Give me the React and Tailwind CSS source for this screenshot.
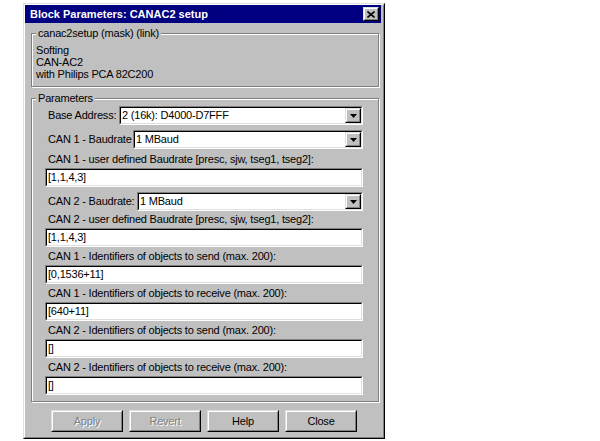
import React from 'react';

const Raised = ({ className = '', innerClassName = '', children }) => (
  <div className={`border border-t-[#dfdfdf] border-l-[#dfdfdf] border-r-black border-b-black ${className}`}>
    <div className={`h-full w-full border border-t-white border-l-white border-r-[#808080] border-b-[#808080] bg-[#c0c0c0] ${innerClassName}`}>
      {children}
    </div>
  </div>
);

const Sunken = ({ className = '', children }) => (
  <div className={`h-[19px] border border-t-[#808080] border-l-[#808080] border-r-white border-b-white ${className}`}>
    <div className="flex h-full w-full items-center border border-t-black border-l-black border-r-[#dfdfdf] border-b-[#dfdfdf] bg-white">
      {children}
    </div>
  </div>
);

const Field = ({ value }) => (
  <Sunken>
    <span className="pl-[1px] leading-[15px] whitespace-nowrap">{value}</span>
  </Sunken>
);

const Select = ({ value }) => (
  <Sunken className="flex-1">
    <span className="flex-1 pl-[1px] leading-[15px] whitespace-nowrap">{value}</span>
    <Raised className="h-[15px] w-[16px]" innerClassName="flex items-center justify-center">
      <svg width="7" height="4" viewBox="0 0 7 4">
        <path d="M0 0H7L3.5 4Z" fill="#000" />
      </svg>
    </Raised>
  </Sunken>
);

const SelectRow = ({ label, width, value, className = '' }) => (
  <div className={`flex items-center ${className}`}>
    <span className={`pl-[3px] whitespace-nowrap ${width}`}>{label}</span>
    <Select value={value} />
  </div>
);

const FieldBlock = ({ label, value, className = '' }) => (
  <div className={className}>
    <div className="h-[15px] pl-[3px] leading-[13px] whitespace-nowrap">{label}</div>
    <Field value={value} />
  </div>
);

const Group = ({ title, className = '', children }) => (
  <div className={`relative border border-[#808080] shadow-[inset_1px_1px_0_#fff,1px_1px_0_#fff] ${className}`}>
    <span className="absolute -top-[7px] left-[4px] bg-[#c0c0c0] px-[2px] leading-[13px]">{title}</span>
    {children}
  </div>
);

const Button = ({ label, disabled }) => (
  <Raised className="h-[22px] w-[72px]" innerClassName="flex items-center justify-center">
    <span className={disabled ? 'text-[#808080] [text-shadow:1px_1px_0_#fff]' : ''}>{label}</span>
  </Raised>
);

export default function App() {
  return (
    <div className="min-h-[441px] bg-white pt-[3px] pl-[23px] font-['Liberation_Sans',Arial,sans-serif] text-[11px] tracking-[-0.2px] text-black">
      <div className="h-[436px] w-[362px] border border-t-[#dfdfdf] border-l-[#dfdfdf] border-r-black border-b-black">
        <div className="flex h-full flex-col border border-t-white border-l-white border-r-[#808080] border-b-[#808080] bg-[#c0c0c0]">
          {/* title bar */}
          <div className="mr-[2px] flex h-[18px] items-center justify-between bg-[#000080] pl-[5px] pr-[2px]">
            <span className="text-[11px] font-bold tracking-normal text-white">Block Parameters: CANAC2 setup</span>
            <Raised className="h-[14px] w-[16px]" innerClassName="flex items-center justify-center">
              <svg width="8" height="7" viewBox="0 0 8 7">
                <path d="M0.5 0.5L7.5 6.5M7.5 0.5L0.5 6.5" stroke="#000" strokeWidth="1.6" />
              </svg>
            </Raised>
          </div>

          <Group title="canac2setup (mask) (link)" className="ml-[6px] mr-[4px] mt-[10px] pl-[4px] pt-[10px] pb-[6px]">
            <div className="leading-[12px]">
              <div>Softing</div>
              <div>CAN-AC2</div>
              <div>with Philips PCA 82C200</div>
            </div>
          </Group>

          <Group title="Parameters" className="ml-[6px] mr-[4px] mt-[11px] pl-[13px] pr-[15px] pt-[7px] pb-[6px]">
            <SelectRow label="Base Address:" width="w-[74px]" value="2 (16k): D4000-D7FFF" />
            <SelectRow label="CAN 1 - Baudrate" width="w-[88px]" value="1 MBaud" className="mt-[5px]" />
            <FieldBlock label="CAN 1 - user defined Baudrate [presc, sjw, tseg1, tseg2]:" value="[1,1,4,3]" className="mt-[4px]" />
            <SelectRow label="CAN 2 - Baudrate:" width="w-[92px]" value="1 MBaud" className="mt-[5px]" />
            <FieldBlock label="CAN 2 - user defined Baudrate [presc, sjw, tseg1, tseg2]:" value="[1,1,4,3]" className="mt-[2px]" />
            <FieldBlock label="CAN 1 - Identifiers of objects to send (max. 200):" value="[0,1536+11]" className="mt-[3px]" />
            <FieldBlock label="CAN 1 - Identifiers of objects to receive (max. 200):" value="[640+11]" className="mt-[3px]" />
            <FieldBlock label="CAN 2 - Identifiers of objects to send (max. 200):" value="[]" className="mt-[3px]" />
            <FieldBlock label="CAN 2 - Identifiers of objects to receive (max. 200):" value="[]" className="mt-[3px]" />
          </Group>

          <div className="mt-[8px] flex justify-center gap-[6px]">
            <Button label="Apply" disabled />
            <Button label="Revert" disabled />
            <Button label="Help" />
            <Button label="Close" />
          </div>
        </div>
      </div>
    </div>
  );
}
